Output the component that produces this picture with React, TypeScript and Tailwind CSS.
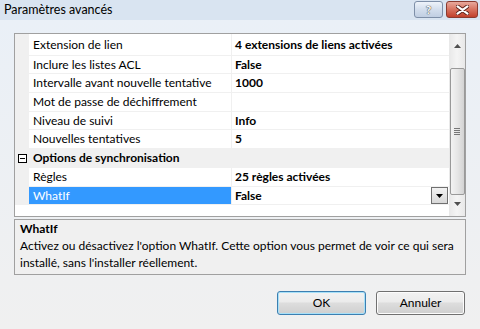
import { ReactNode } from "react";

type Row = { name: string; value: string; selected?: boolean; dropdown?: boolean; h: number };

const general: Row[] = [
  { name: "Extension de lien", value: "4 extensions de liens activées", h: 22 },
  { name: "Inclure les listes ACL", value: "False", h: 18 },
  { name: "Intervalle avant nouvelle tentative", value: "1000", h: 19 },
  { name: "Mot de passe de déchiffrement", value: "", h: 19 },
  { name: "Niveau de suivi", value: "Info", h: 18 },
  { name: "Nouvelles tentatives", value: "5", h: 19 },
];

const sync: Row[] = [
  { name: "Règles", value: "25 règles activées", h: 19 },
  { name: "WhatIf", value: "False", selected: true, dropdown: true, h: 18 },
];

function PropRow({ row }: { row: Row }) {
  return (
    <div className="flex" style={{ height: row.h }}>
      <div className="w-[14px] shrink-0 bg-[#f0f0f0]" />
      <div
        className={`w-[203px] shrink-0 border-r border-b border-[#f0f0f0] pl-[4px] flex items-center whitespace-nowrap ${
          row.selected ? "bg-[#3399ff] text-white" : "text-black"
        }`}
      >
        {row.name}
      </div>
      <div className="flex-1 border-b border-[#f0f0f0] pl-[3px] pr-[1px] flex items-center font-bold text-black whitespace-nowrap">
        <span className="flex-1">{row.value}</span>
        {row.dropdown && (
          <div className="w-[17px] h-[17px] border border-[#707070] bg-gradient-to-b from-[#f2f2f2] to-[#d8d8d8] flex items-center justify-center">
            <svg width="7" height="4" viewBox="0 0 7 4">
              <path d="M0 0h7L3.5 4z" fill="#000" />
            </svg>
          </div>
        )}
      </div>
    </div>
  );
}

function Category({ children }: { children: ReactNode }) {
  return (
    <div className="flex h-[19px] bg-[#f0f0f0] border-b border-[#f0f0f0] items-center">
      <div className="w-[14px] shrink-0 flex items-center justify-center">
        <div className="w-[9px] h-[9px] border border-[#000] bg-white flex items-center justify-center">
          <div className="w-[5px] h-[1px] bg-black" />
        </div>
      </div>
      <div className="pl-[4px] font-bold text-black whitespace-nowrap">{children}</div>
    </div>
  );
}

function Scrollbar() {
  return (
    <div className="w-[16px] shrink-0 bg-gradient-to-r from-[#e8e8e8] via-[#f4f4f4] to-[#e8e8e8] flex flex-col items-center">
      <div className="h-[17px] w-full flex items-center justify-center mt-[3px]">
        <svg width="7" height="4" viewBox="0 0 7 4">
          <path d="M3.5 0L7 4H0z" fill="#505050" />
        </svg>
      </div>
      <div className="mt-[14px] w-[15px] h-[127px] rounded-[2px] border border-[#999] bg-gradient-to-r from-[#f3f3f3] via-[#e6e6e6] to-[#d3d3d3] flex items-center justify-center">
        <div className="flex flex-col gap-[1px]">
          <div className="w-[6px] h-[1px] bg-[#777]" />
          <div className="w-[6px] h-[1px] bg-[#777]" />
          <div className="w-[6px] h-[1px] bg-[#777]" />
          <div className="w-[6px] h-[1px] bg-[#777]" />
        </div>
      </div>
      <div className="h-[17px] w-full flex items-center justify-center">
        <svg width="7" height="4" viewBox="0 0 7 4">
          <path d="M0 0h7L3.5 4z" fill="#505050" />
        </svg>
      </div>
    </div>
  );
}

function Button({ label, primary }: { label: string; primary?: boolean }) {
  return (
    <div
      className={`w-[89px] h-[24px] rounded-[3px] border flex items-center justify-center text-black bg-[linear-gradient(#f2f2f2,#ebebeb_45%,#dddddd_50%,#cfcfcf)] ${
        primary ? "border-[#3c7fb1] shadow-[inset_0_0_0_1px_#a7e0f8]" : "border-[#707070] shadow-[inset_0_0_0_1px_#fcfcfc]"
      }`}
    >
      {label}
    </div>
  );
}

export default function App() {
  return (
    <div
      className="w-[480px] h-[329px] overflow-hidden flex flex-col text-[12px] leading-none bg-[#eef1f6]"
      style={{ fontFamily: '"Segoe UI", Lato, "Noto Sans", sans-serif' }}
    >
      <div className="h-[20px] shrink-0 flex items-start bg-[#d9e4f1]">
        <div className="pl-[4px] pt-[4px] flex-1 text-black text-[12.5px]">Paramètres avancés</div>
        <div className="mt-[1px] w-[29px] h-[17px] rounded-[3px] border border-[#7e8fa8] bg-[linear-gradient(#eef3fa,#d3deed_50%,#c0cee2)] flex items-center justify-center text-[#fff] font-bold text-[12px] [text-shadow:0_0_1px_#333,0_0_1px_#333]">
          ?
        </div>
        <div className="mt-[1px] ml-[3px] mr-[2px] w-[32px] h-[17px] rounded-[3px] border border-[#8a3b30] bg-[linear-gradient(#e8a99c,#d7725f_50%,#c2402b)] flex items-center justify-center">
          <svg width="13" height="10" viewBox="0 0 13 10">
            <path d="M1 1l11 8M12 1L1 9" stroke="#5a2018" strokeWidth="4" strokeLinecap="round" />
            <path d="M1.5 1.3l10 7.4M11.5 1.3l-10 7.4" stroke="#fff" strokeWidth="2.2" strokeLinecap="round" />
          </svg>
        </div>
      </div>

      <div className="flex-1 flex flex-col px-[14px] pt-[13px] bg-gradient-to-b from-[#eaf0f7] to-[#f0f0f0]">
        <div className="h-[184px] border border-[#a0a0a0] bg-white flex">
          <div className="flex-1 flex flex-col">
            {general.map((r) => (
              <PropRow key={r.name} row={r} />
            ))}
            <Category>Options de synchronisation</Category>
            {sync.map((r) => (
              <PropRow key={r.name} row={r} />
            ))}
          </div>
          <Scrollbar />
        </div>

        <div className="mt-[2px] h-[56px] border border-[#a0a0a0] bg-[#f0f0f0] px-[5px] pt-[3px] text-black">
          <div className="font-bold">WhatIf</div>
          <div className="mt-[2px] leading-[17px]">
            Activez ou désactivez l'option WhatIf. Cette option vous permet de voir ce qui sera installé, sans l'installer
            réellement.
          </div>
        </div>

        <div className="flex justify-end gap-[10px] mt-[16px] pr-[1px]">
          <Button label="OK" primary />
          <Button label="Annuler" />
        </div>
      </div>
    </div>
  );
}
